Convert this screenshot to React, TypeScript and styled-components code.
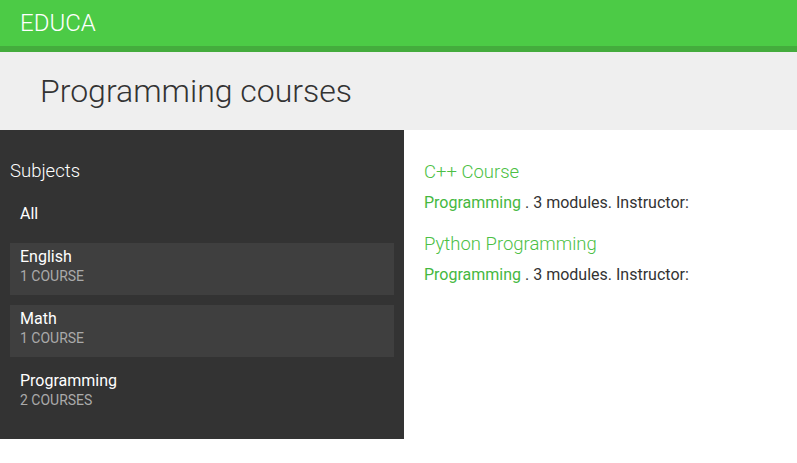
import React, { FC } from "react";
import styled, { createGlobalStyle } from "styled-components";

type Subject = { name: string; count?: number; highlighted?: boolean };
type Course = { title: string; subject: string; modules: number };

const subjects: Subject[] = [
  { name: "English", count: 1, highlighted: true },
  { name: "Math", count: 1, highlighted: true },
  { name: "Programming", count: 2 },
];

const courses: Course[] = [
  { title: "C++ Course", subject: "Programming", modules: 3 },
  { title: "Python Programming", subject: "Programming", modules: 3 },
];

const GlobalStyle = createGlobalStyle`
  html, body {
    margin: 0;
    padding: 0;
    background: #ffffff;
    font-family: Roboto, "Liberation Sans", Arial, sans-serif;
  }
`;

const SubjectItem: FC<Subject> = ({ name, count, highlighted }) => (
  <SubjectBox $highlighted={highlighted}>
    <SubjectName>{name}</SubjectName>
    <SubjectCount>
      {count} {count === 1 ? "COURSE" : "COURSES"}
    </SubjectCount>
  </SubjectBox>
);

const CourseItem: FC<Course> = ({ title, subject, modules }) => (
  <CourseBlock>
    <CourseTitle>{title}</CourseTitle>
    <CourseMeta>
      <SubjectLink>{subject}</SubjectLink> . {modules} modules. Instructor:
    </CourseMeta>
  </CourseBlock>
);

const App: FC = () => (
  <>
    <GlobalStyle />
    <Header>
      <Logo>EDUCA</Logo>
    </Header>
    <TitleBar>
      <PageTitle>Programming courses</PageTitle>
    </TitleBar>
    <Content>
      <Sidebar>
        <SidebarHeading>Subjects</SidebarHeading>
        <AllItem>All</AllItem>
        <SubjectList>
          {subjects.map((s) => (
            <SubjectItem {...s} key={s.name} />
          ))}
        </SubjectList>
      </Sidebar>
      <Main>
        {courses.map((c) => (
          <CourseItem {...c} key={c.title} />
        ))}
      </Main>
    </Content>
  </>
);

export default App;

const Header = styled.header`
  height: 46px;
  background: #4ccb46;
  border-bottom: 6px solid #44ac3d;
  display: flex;
  align-items: center;
  padding: 0 20px;
`;

const Logo = styled.div`
  color: #ffffff;
  font-size: 24px;
  font-weight: 300;
  line-height: 28px;
`;

const TitleBar = styled.div`
  height: 78px;
  background: #efefef;
  display: flex;
  align-items: center;
  padding: 0 40px;
`;

const PageTitle = styled.h1`
  margin: 0;
  font-size: 32px;
  font-weight: 300;
  color: #333333;
  line-height: 38px;
`;

const Content = styled.div`
  display: flex;
  align-items: flex-start;
`;

const Sidebar = styled.aside`
  width: 404px;
  flex-shrink: 0;
  box-sizing: border-box;
  background: #333333;
  padding: 29px 10px 20px;
`;

const SidebarHeading = styled.h3`
  margin: 0 0 11px;
  font-size: 18.5px;
  font-weight: 300;
  line-height: 24px;
  color: #ffffff;
`;

const AllItem = styled.div`
  padding: 10px;
  font-size: 16px;
  line-height: 20px;
  color: #ffffff;
  margin-bottom: 9px;
`;

const SubjectList = styled.div`
  display: flex;
  flex-direction: column;
  gap: 10px;
`;

const SubjectBox = styled.div<{ $highlighted?: boolean }>`
  height: 52px;
  box-sizing: border-box;
  padding: 4px 10px 0;
  background: ${({ $highlighted }) => ($highlighted ? "#3f3f3f" : "transparent")};
`;

const SubjectName = styled.div`
  font-size: 16px;
  line-height: 20px;
  color: #ffffff;
`;

const SubjectCount = styled.div`
  font-size: 14px;
  line-height: 18px;
  color: #aaaaaa;
`;

const Main = styled.main`
  flex: 1;
  padding: 30px 20px;
  display: flex;
  flex-direction: column;
  gap: 19px;
`;

const CourseBlock = styled.div`
  display: flex;
  flex-direction: column;
  gap: 9px;
`;

const CourseTitle = styled.h3`
  margin: 0;
  font-size: 18.5px;
  font-weight: 300;
  line-height: 24px;
  color: #4cbf45;
`;

const CourseMeta = styled.div`
  font-size: 16px;
  line-height: 20px;
  color: #333333;
`;

const SubjectLink = styled.span`
  color: #45b83f;
`;
